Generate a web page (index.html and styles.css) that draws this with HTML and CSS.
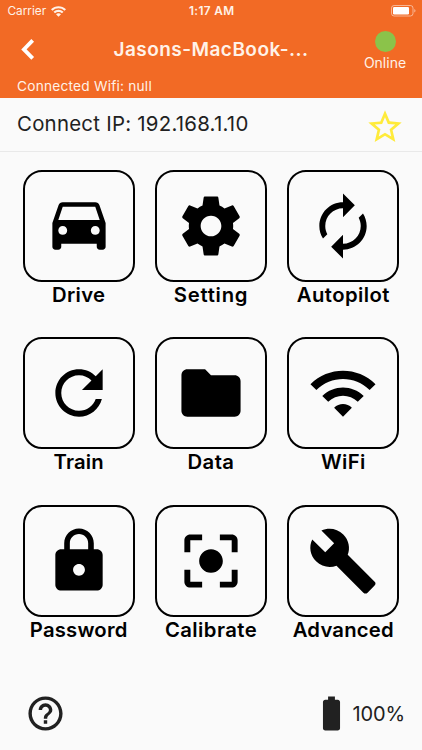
FILE: index.html
```html
<!DOCTYPE html>
<html lang="en">
<head>
<meta charset="utf-8">
<meta name="viewport" content="width=device-width, initial-scale=1">
<title>Jasons-MacBook</title>
<link rel="stylesheet" href="styles.css">
</head>
<body>
<div class="app">
  <header class="header">
    <div class="status">
      <div class="carrier"><span>Carrier</span>
        <svg class="status-wifi" viewBox="0 0 15 11"><path d="M0 3.3C4.2-.9 10.8-.9 15 3.3L13.5 4.8C10.2 1.5 4.8 1.5 1.5 4.8zM2.5 5.8C5.3 3 9.7 3 12.5 5.8L11 7.3C9.1 5.4 5.9 5.4 4 7.3zM5 8.3C6.4 6.9 8.6 6.9 10 8.3L7.5 10.8z"/></svg>
      </div>
      <span class="clock">1:17 AM</span>
      <svg class="status-battery" viewBox="0 0 25 12"><rect class="shell" x=".5" y=".5" width="21.5" height="10.5" rx="2.6"/><rect x="2" y="2" width="16" height="7.5" rx="1.2"/><path class="tip" d="M23.3 4v3.5q1.2-.5 1.2-1.75T23.3 4z"/></svg>
    </div>
    <div class="bar">
      <svg class="back" viewBox="0 0 14 21"><path d="M11.7 1.4 2.9 10.4l8.8 9"/></svg>
      <h1 class="title">Jasons-MacBook-...</h1>
      <div class="online"><span class="dot"></span><span class="online-text">Online</span></div>
    </div>
    <div class="wifi-line"><span>Connected Wifi: null</span></div>
  </header>
  <div class="ip-row">
    <span class="ip">Connect IP: 192.168.1.10</span>
    <svg class="star" viewBox="0 0 24 24"><path d="M22 9.24l-7.19-.62L12 2 9.19 8.63 2 9.24l5.46 4.73L5.82 21 12 17.27 18.18 21l-1.63-7.03L22 9.24zM12 15.4l-3.76 2.27 1-4.28-3.32-2.88 4.38-.38L12 6.1l1.71 4.04 4.38.38-3.32 2.88 1 4.28L12 15.4z"/></svg>
  </div>
  <main class="grid">
    <div class="item"><div class="tile"><svg viewBox="-.17 -.17 24.34 24.34"><path d="M18.92 5.01C18.72 4.42 18.16 4 17.5 4h-11c-.66 0-1.21.42-1.42 1.01L3 11v8c0 .55.45 1 1 1h1c.55 0 1-.45 1-1v-1h12v1c0 .55.45 1 1 1h1c.55 0 1-.45 1-1v-8l-2.08-5.99zM6.5 15c-.83 0-1.5-.67-1.5-1.5S5.67 12 6.5 12s1.5.67 1.5 1.5S7.33 15 6.5 15zm11 0c-.83 0-1.5-.67-1.5-1.5s.67-1.5 1.5-1.5 1.5.67 1.5 1.5-.67 1.5-1.5 1.5zM5 10l1.5-4.5h11L19 10H5z"/></svg></div><span class="label drive">Drive</span></div>
    <div class="item"><div class="tile"><svg viewBox="-.17 -.17 24.34 24.34"><path d="M19.43 12.98c.04-.32.07-.64.07-.98s-.03-.66-.07-.98l2.11-1.65c.19-.15.24-.42.12-.64l-2-3.46c-.12-.22-.39-.3-.61-.22l-2.49 1c-.52-.4-1.08-.73-1.69-.98l-.38-2.65C14.46 2.18 14.25 2 14 2h-4c-.25 0-.46.18-.49.42l-.38 2.65c-.61.25-1.17.59-1.69.98l-2.49-1c-.23-.09-.49 0-.61.22l-2 3.46c-.13.22-.07.49.12.64l2.11 1.65c-.04.32-.07.65-.07.98s.03.66.07.98l-2.11 1.65c-.19.15-.24.42-.12.64l2 3.46c.12.22.39.3.61.22l2.49-1c.52.4 1.08.73 1.69.98l.38 2.65c.03.24.24.42.49.42h4c.25 0 .46-.18.49-.42l.38-2.65c.61-.25 1.17-.59 1.69-.98l2.49 1c.23.09.49 0 .61-.22l2-3.46c.12-.22.07-.49-.12-.64l-2.11-1.65zM12 15.5c-1.93 0-3.5-1.57-3.5-3.5s1.57-3.5 3.5-3.5 3.5 1.57 3.5 3.5-1.57 3.5-3.5 3.5z"/></svg></div><span class="label setting">Setting</span></div>
    <div class="item"><div class="tile"><svg viewBox="-.17 -.17 24.34 24.34"><path d="M12 6v3l4-4-4-4v3c-4.42 0-8 3.58-8 8 0 1.57.46 3.03 1.24 4.26L6.7 14.8c-.45-.83-.7-1.79-.7-2.8 0-3.31 2.69-6 6-6zm6.76 1.74L17.3 9.2c.44.84.7 1.79.7 2.8 0 3.31-2.69 6-6 6v-3l-4 4 4 4v-3c4.42 0 8-3.58 8-8 0-1.57-.46-3.03-1.24-4.26z"/></svg></div><span class="label autopilot">Autopilot</span></div>
    <div class="item"><div class="tile"><svg viewBox="-.17 -.17 24.34 24.34"><path d="M17.65 6.35C16.2 4.9 14.21 4 12 4c-4.42 0-7.99 3.58-7.99 8s3.57 8 7.99 8c3.73 0 6.84-2.55 7.73-6h-2.08c-.82 2.33-3.04 4-5.65 4-3.31 0-6-2.69-6-6s2.69-6 6-6c1.66 0 3.14.69 4.22 1.78L13 11h7V4l-2.35 2.35z"/></svg></div><span class="label train">Train</span></div>
    <div class="item"><div class="tile"><svg viewBox="-.17 -.17 24.34 24.34"><path d="M10 4H4c-1.1 0-1.99.9-1.99 2L2 18c0 1.1.9 2 2 2h16c1.1 0 2-.9 2-2V8c0-1.1-.9-2-2-2h-8l-2-2z"/></svg></div><span class="label data">Data</span></div>
    <div class="item"><div class="tile"><svg viewBox="-.17 -.17 24.34 24.34"><path d="M1 9l2 2c4.97-4.97 13.03-4.97 18 0l2-2C16.93 2.93 7.08 2.93 1 9zm8 8l3 3 3-3c-1.65-1.66-4.34-1.66-6 0zm-4-4l2 2c2.76-2.76 7.24-2.76 10 0l2-2C15.14 9.14 8.87 9.14 5 13z"/></svg></div><span class="label wifi">WiFi</span></div>
    <div class="item"><div class="tile"><svg viewBox="-.17 -.17 24.34 24.34"><path d="M18 8h-1V6c0-2.76-2.24-5-5-5S7 3.24 7 6v2H6c-1.1 0-2 .9-2 2v10c0 1.1.9 2 2 2h12c1.1 0 2-.9 2-2V10c0-1.1-.9-2-2-2zm-6 9c-1.1 0-2-.9-2-2s.9-2 2-2 2 .9 2 2-.9 2-2 2zm3.1-9H8.9V6c0-1.71 1.39-3.1 3.1-3.1 1.71 0 3.1 1.39 3.1 3.1v2z"/></svg></div><span class="label password">Password</span></div>
    <div class="item"><div class="tile"><svg viewBox="-.17 -.17 24.34 24.34"><path d="M5 15H3v4c0 1.1.9 2 2 2h4v-2H5v-4zM5 5h4V3H5c-1.1 0-2 .9-2 2v4h2V5zm14-2h-4v2h4v4h2V5c0-1.1-.9-2-2-2zm0 16h-4v2h4c1.1 0 2-.9 2-2v-4h-2v4zM12 8c-2.21 0-4 1.79-4 4s1.79 4 4 4 4-1.79 4-4-1.79-4-4-4z"/></svg></div><span class="label calibrate">Calibrate</span></div>
    <div class="item"><div class="tile"><svg viewBox="-.17 -.17 24.34 24.34"><path d="M22.7 19l-9.1-9.1c.9-2.3.4-5-1.5-6.9-2-2-5-2.4-7.4-1.3L9 6 6 9 1.6 4.7C.4 7.1.9 10.1 2.9 12.1c1.9 1.9 4.6 2.4 6.9 1.5l9.1 9.1c.4.4 1 .4 1.4 0l2.3-2.3c.5-.4.5-1.1.1-1.4z"/></svg></div><span class="label advanced">Advanced</span></div>
  </main>
  <footer class="footer">
    <svg class="help" viewBox="0 0 24 24"><path d="M11 18h2v-2h-2v2zm1-16C6.48 2 2 6.48 2 12s4.48 10 10 10 10-4.48 10-10S17.52 2 12 2zm0 18c-4.41 0-8-3.59-8-8s3.59-8 8-8 8 3.59 8 8-3.59 8-8 8zm0-14c-2.21 0-4 1.79-4 4h2c0-1.1.9-2 2-2s2 .9 2 2c0 2-3 1.75-3 5h2c0-2.25 3-2.5 3-5 0-2.21-1.79-4-4-4z"/></svg>
    <div class="power">
      <svg class="battery" viewBox="0 0 24 24"><path d="M15.67 4H14V2h-4v2H8.33C7.6 4 7 4.6 7 5.33v15.33C7 21.4 7.6 22 8.33 22h7.33c.74 0 1.34-.6 1.34-1.33V5.33C17 4.6 16.4 4 15.67 4z"/></svg>
      <span class="percent">100%</span>
    </div>
  </footer>
</div>
</body>
</html>
```
FILE: styles.css
```css
* { box-sizing: border-box; }
body {
  margin: 0;
  background: #fafafa;
  color: #212121;
  font-family: Inter, "Liberation Sans", sans-serif;
}
svg { display: block; fill: currentColor; flex: none; }
.app {
  width: 422px;
  height: 750px;
  overflow: hidden;
  display: flex;
  flex-direction: column;
}
.header {
  height: 98px;
  background: #f26a25;
  color: #fff2e8;
  display: flex;
  flex-direction: column;
}
.status {
  height: 22px;
  display: grid;
  grid-template-columns: 1fr auto 1fr;
  align-items: center;
  padding: 0 6px 0 7.5px;
  font-size: 12px;
  line-height: 22px;
}
.carrier { display: flex; align-items: center; gap: 5px; }
.carrier span { font-size: 11.8px; }
.status-wifi { width: 15px; height: 11px; }
.clock { font-weight: 600; font-size: 11.8px; letter-spacing: .35px; }
.status-battery { width: 25px; height: 12px; justify-self: end; color: #fff; }
.shell { fill: none; stroke: #fff; stroke-opacity: .5; }
.tip { fill-opacity: .55; }
.bar {
  height: 54px;
  display: grid;
  grid-template-columns: 60px 1fr 60px;
  padding: 0 7px 0 0;
}
.back { width: 14px; height: 21px; margin: 17px 0 0 21px; fill: none; stroke: #fff; stroke-width: 3.8; }
.title {
  margin: 0 0 0 7px;
  text-align: center;
  font-size: 19px;
  font-weight: 600;
  line-height: 55px;
  letter-spacing: .46px;
  white-space: nowrap;
}
.online { display: flex; flex-direction: column; align-items: center; padding-top: 9px; }
.dot { width: 21px; height: 21px; border-radius: 50%; background: #8bc34a; }
.online-text { font-size: 14px; line-height: 20px; margin-top: 1px; }
.wifi-line { padding-left: 17px; font-size: 13.7px; line-height: 20px; letter-spacing: .22px; }
.ip-row {
  height: 54px;
  border-bottom: 1px solid #e9e9e9;
  display: flex;
  justify-content: space-between;
  padding: 0 17px;
}
.ip { font-size: 20.4px; line-height: 52px; letter-spacing: .25px; }
.star { width: 40px; height: 40px; margin-top: 9px; color: #ffeb3b; }
.grid {
  display: grid;
  grid-template-columns: repeat(3, 132.3px);
  grid-auto-rows: 167.4px;
  justify-content: center;
  padding-top: 18px;
  height: 530px;
  color: #000;
}
.item { display: flex; flex-direction: column; align-items: center; }
.tile {
  width: 112px;
  height: 112px;
  border: 2px solid #000;
  border-radius: 19px;
  display: flex;
  align-items: center;
  justify-content: center;
}
.tile svg { width: 72px; height: 72px; }
.label {
  font-size: 20.3px;
  font-weight: 600;
  line-height: 26px;
  letter-spacing: .3px;
  white-space: nowrap;
}
.setting { letter-spacing: .75px; }
.autopilot, .calibrate { letter-spacing: .42px; }
.data { letter-spacing: .4px; }
.password, .advanced, .train { letter-spacing: .2px; }
.footer {
  display: flex;
  justify-content: space-between;
  align-items: center;
  height: 62px;
  padding: 0 17px 0 25px;
}
.help { width: 41px; height: 41px; }
.power { display: flex; align-items: center; }
.battery { width: 41px; height: 41px; }
.percent { font-size: 20px; line-height: 24px; letter-spacing: -.1px; padding-top: 1px; }
```
